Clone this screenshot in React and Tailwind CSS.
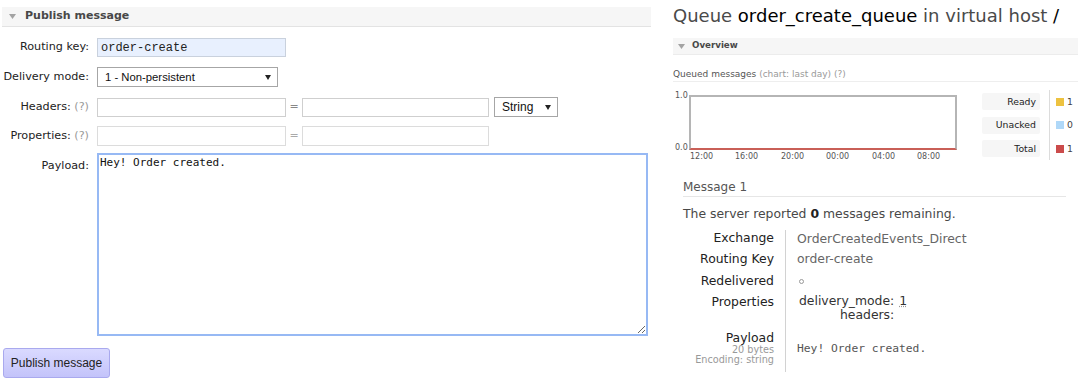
import React from 'react';

function Tri({ color = '#a3a3a3' }) {
  return (
    <svg width="7" height="5" viewBox="0 0 7 5" className="shrink-0">
      <path d="M0 0h7L3.5 5z" fill={color} />
    </svg>
  );
}

function FakeSelect({ className, children }) {
  return (
    <div
      className={`flex items-center justify-between border border-[#a6a6a6] bg-white pl-[7px] pr-[6px] font-['Liberation_Sans',Arial,sans-serif] text-[#111] ${className}`}
    >
      <span>{children}</span>
      <svg width="6" height="5" viewBox="0 0 6 5">
        <path d="M0 0h6L3 5z" fill="#222" />
      </svg>
    </div>
  );
}

function Label({ children, hint }) {
  return (
    <div className="w-[87px] shrink-0 text-right text-[11.2px] text-[#222]">
      {children}
      {hint && <span className="text-[#999]"> (?)</span>}
    </div>
  );
}

function PublishPanel() {
  return (
    <div className="w-[651px] shrink-0 pl-[2px] pt-[7px]">
      {/* Section header */}
      <div className="flex h-[20px] items-center border-b border-[#e3e3e3] bg-[#f6f6f6] pl-[7px]">
        <Tri />
        <span className="ml-[9px] text-[11px] font-bold text-[#484848]">Publish message</span>
      </div>

      <div className="mt-[11px] flex h-[19px] items-center">
        <Label>Routing key:</Label>
        <div className="ml-[8px] flex h-[19px] w-[189px] items-center border border-[#c9d1dd] bg-[#e8f0fe] pl-[3px] font-['Liberation_Mono',monospace] text-[12px] text-[#222]">
          order-create
        </div>
      </div>

      <div className="mt-[10px] flex h-[20px] items-center">
        <Label>Delivery mode:</Label>
        <FakeSelect className="ml-[8px] h-[20px] w-[181px] text-[11.3px]">1 - Non-persistent</FakeSelect>
      </div>

      <div className="mt-[10px] flex h-[20px] items-center">
        <Label hint>Headers:</Label>
        <div className="ml-[8px] h-[19px] w-[189px] border border-[#cfcfcf] bg-white" />
        <span className="w-[16px] text-center text-[11px] text-[#888]">=</span>
        <div className="h-[19px] w-[187px] border border-[#cfcfcf] bg-white" />
        <FakeSelect className="ml-[5px] h-[20px] w-[64px] text-[12px]">String</FakeSelect>
      </div>

      <div className="mt-[9px] flex h-[20px] items-center">
        <Label hint>Properties:</Label>
        <div className="ml-[8px] h-[20px] w-[189px] border border-[#dcdcdc] bg-white" />
        <span className="w-[16px] text-center text-[11px] text-[#aaa]">=</span>
        <div className="h-[20px] w-[187px] border border-[#dcdcdc] bg-white" />
      </div>

      <div className="mt-[7px] flex items-start">
        <div className="pt-[5px]">
          <Label>Payload:</Label>
        </div>
        <textarea
          readOnly
          defaultValue="Hey! Order created."
          className="ml-[8px] block h-[183px] w-[551px] border-2 border-[#97b9f4] bg-white px-[1px] py-[1px] font-['DejaVu_Sans_Mono',monospace] text-[11px] leading-[14px] text-[#111] outline-none"
        />
      </div>

      <button className="ml-[1px] mt-[12px] h-[30px] w-[107px] rounded-[3px] border border-[#a9a9ee] bg-gradient-to-b from-[#dadaff] to-[#c3c3fa] font-['Liberation_Sans',Arial,sans-serif] text-[12px] text-[#222]">
        Publish message
      </button>
    </div>
  );
}

function Chart() {
  const ticks = [
    { t: '12:00', x: 'left-[17px]' },
    { t: '16:00', x: 'left-[62px]' },
    { t: '20:00', x: 'left-[108px]' },
    { t: '00:00', x: 'left-[153px]' },
    { t: '04:00', x: 'left-[199px]' },
    { t: '08:00', x: 'left-[244px]' },
  ];
  return (
    <div className="relative h-[72px] w-[284px] shrink-0 text-[8px] leading-[10px] text-[#555]">
      <span className="absolute left-[2px] top-[1px]">1.0</span>
      <span className="absolute left-[2px] top-[53px]">0.0</span>
      <div className="absolute left-[16px] top-[5px] h-[55px] w-[268px] border-2 border-[#b5b5b5] border-b-[#c95f57] bg-white" />
      {ticks.map((k) => (
        <span key={k.t} className={`absolute top-[62px] ${k.x}`}>
          {k.t}
        </span>
      ))}
    </div>
  );
}

function Legend() {
  const rows = [
    { name: 'Ready', color: 'bg-[#edc240]', value: '1' },
    { name: 'Unacked', color: 'bg-[#afd8f8]', value: '0' },
    { name: 'Total', color: 'bg-[#cb4b4b]', value: '1' },
  ];
  return (
    <div className="ml-[25px] flex h-[70px] text-[9.3px] text-[#222]">
      <div className="flex flex-col gap-[6.5px] pt-[3px]">
        {rows.map((r) => (
          <div
            key={r.name}
            className="flex h-[17px] w-[58px] items-center justify-end rounded-[2px] bg-[#f6f6f6] pr-[4px]"
          >
            {r.name}
          </div>
        ))}
      </div>
      <div className="ml-[9px] border-l border-[#dcdcdc]" />
      <div className="flex flex-col gap-[6.5px] pl-[6px] pt-[3px]">
        {rows.map((r) => (
          <div key={r.name} className="flex h-[17px] items-center">
            <span className={`h-[8px] w-[8px] ${r.color}`} />
            <span className="ml-[3px] text-[#444]">{r.value}</span>
          </div>
        ))}
      </div>
    </div>
  );
}

function Row({ label, className = 'items-center', children }) {
  return (
    <div className={`flex ${className}`}>
      <div className="flex w-[103px] shrink-0 justify-end border-r border-[#d2d2d2] pr-[11px]">{label}</div>
      <div className="pl-[11px]">{children}</div>
    </div>
  );
}

function QueuePanel() {
  return (
    <div className="ml-[22px] w-[405px] shrink-0 pt-[5px]">
      <h1 className="text-[18px] leading-[22px] text-[#4a4a4a]">
        Queue <span className="text-black">order_create_queue</span> in virtual host{' '}
        <span className="text-black">/</span>
      </h1>

      <div className="mt-[11px] flex h-[17px] items-center border-b border-[#ececec] bg-[#f6f6f6] pl-[5px]">
        <Tri />
        <span className="ml-[7px] text-[8.7px] font-bold text-[#484848]">Overview</span>
      </div>

      <div className="mt-[13px] border-b border-[#eeeeee] pb-[1px] text-[9px] leading-[12px] text-[#555]">
        Queued messages <span className="text-[#999]">(chart: last day)</span>{' '}
        <span className="text-[#999]">(?)</span>
      </div>

      <div className="mt-[8px] flex">
        <Chart />
        <Legend />
      </div>

      <div className="ml-[10px] w-[383px]">
        <div className="mt-[18px] border-b border-[#e6e6e6] pb-[1px] text-[12px] leading-[15px] text-[#555]">
          Message 1
        </div>
        <p className="mt-[9px] text-[12.4px] leading-[15px] text-[#484848]">
          The server reported <span className="font-bold text-[#222]">0</span> messages remaining.
        </p>

        <div className="mt-[9px] text-[12.4px] leading-[15px]">
          <Row label={<span className="text-[#222]">Exchange</span>} className="h-[16px]">
            <div className="flex h-full items-center text-[#666]">OrderCreatedEvents_Direct</div>
          </Row>
          <Row label={<span className="self-center text-[#222]">Routing Key</span>} className="h-[24px]">
            <div className="flex h-full items-center text-[#666]">order-create</div>
          </Row>
          <Row label={<span className="self-center text-[#222]">Redelivered</span>} className="h-[20px]">
            <div className="flex h-full items-center pl-[2px] pt-[2px]">
              <span className="h-[5px] w-[5px] rounded-full border border-[#999]" />
            </div>
          </Row>
          <Row label={<span className="pt-[4px] text-[#222]">Properties</span>} className="h-[41px]">
            <div className="grid grid-cols-[auto_auto] gap-x-[5px] pl-[2px] pt-[4px] leading-[14px] text-[#333]">
              <span className="text-right">delivery_mode:</span>
              <span className="underline decoration-dotted decoration-[#999]">1</span>
              <span className="text-right">headers:</span>
              <span />
            </div>
          </Row>
          <Row
            label={
              <div className="text-right">
                <div className="leading-[14px] text-[#222]">Payload</div>
                <div className="text-[9.7px] leading-[10px] text-[#999]">20 bytes</div>
                <div className="text-[9.7px] leading-[10px] text-[#999]">Encoding: string</div>
              </div>
            }
            className="h-[41px]"
          >
            <div className="pt-[11px] font-['DejaVu_Sans_Mono',monospace] text-[11.3px] leading-[14px] text-[#555]">
              Hey! Order created.
            </div>
          </Row>
        </div>
      </div>
    </div>
  );
}

export default function App() {
  return (
    <div className="flex h-[384px] w-[1081px] overflow-hidden bg-white font-['DejaVu_Sans',Verdana,sans-serif]">
      <PublishPanel />
      <QueuePanel />
    </div>
  );
}
